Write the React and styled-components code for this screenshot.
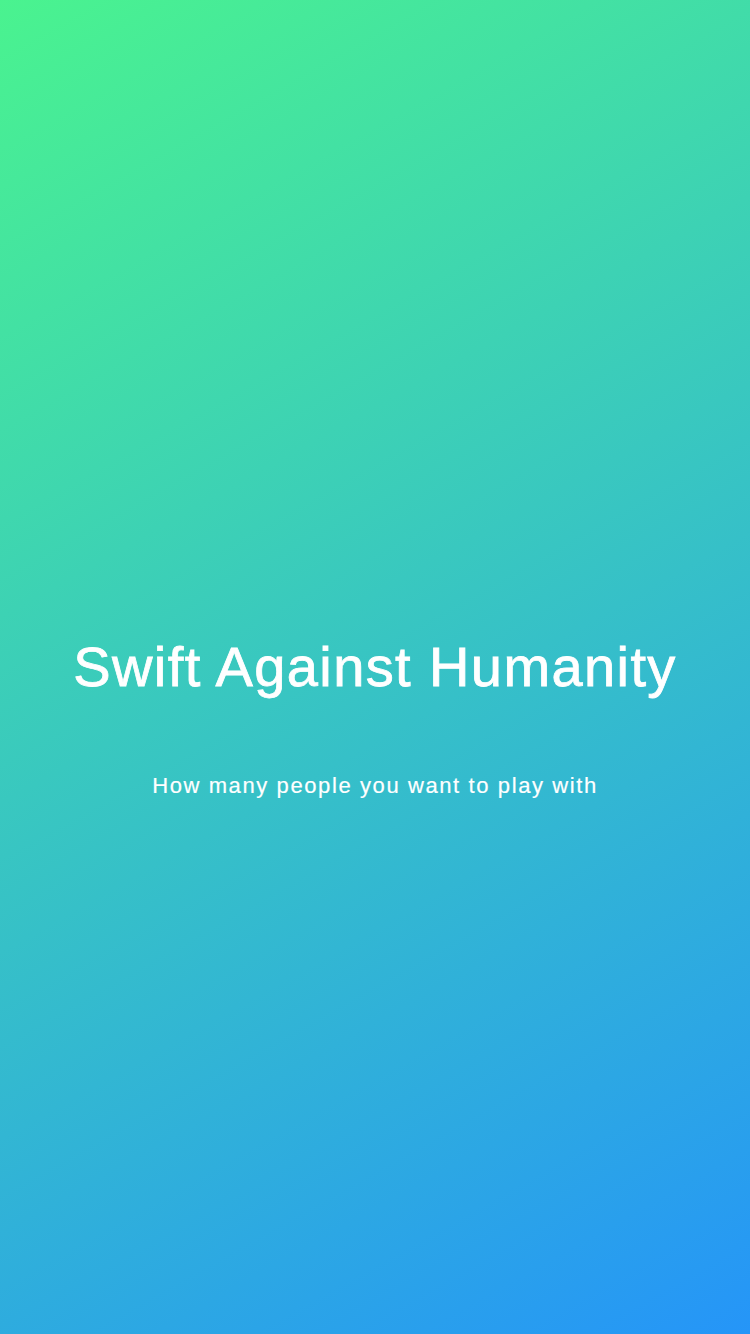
import React from "react";
import styled, { createGlobalStyle } from "styled-components";

const Global = createGlobalStyle`
  html, body { margin: 0; padding: 0; }
  body { font-family: "Liberation Sans", Arial, sans-serif; }
`;

const Screen = styled.div`
  width: 750px;
  height: 1334px;
  box-sizing: border-box;
  padding-top: 635px;
  display: flex;
  flex-direction: column;
  align-items: center;
  background: linear-gradient(150.7deg, #4af38f 0%, #2595f8 100%);
  color: #ffffff;
`;

const Title = styled.h1`
  margin: 0;
  font-family: "Liberation Sans", Arial, sans-serif;
  font-weight: 400;
  font-size: 56px;
  line-height: 64px;
  letter-spacing: 1.4px;
  -webkit-text-stroke: 0.8px #ffffff;
  text-align: center;
`;

const Subtitle = styled.p`
  margin: 74px 0 0;
  font-family: "Liberation Sans", Arial, sans-serif;
  font-size: 22px;
  line-height: 26px;
  letter-spacing: 1.6px;
  -webkit-text-stroke: 0.2px #ffffff;
  text-align: center;
`;

export default function App() {
  return (
    <>
      <Global />
      <Screen>
        <Title>Swift Against Humanity</Title>
        <Subtitle>How many people you want to play with</Subtitle>
      </Screen>
    </>
  );
}
